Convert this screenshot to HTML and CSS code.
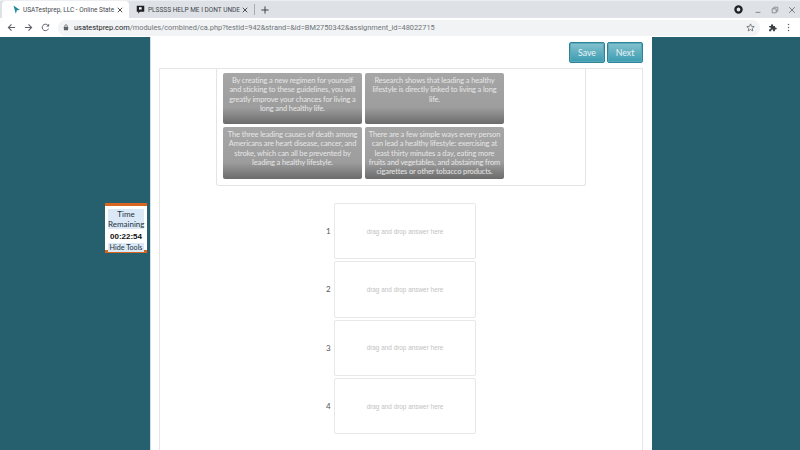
FILE: index.html
```html
<!DOCTYPE html>
<html lang="en">
<head>
<meta charset="utf-8">
<title>USATestprep</title>
<link rel="stylesheet" href="styles.css">
</head>
<body>
<header class="browser">
  <div class="tabstrip">
    <div class="tab tab-active">
      <svg class="favicon" viewBox="0 0 12 12"><path d="M2 0.5 L10.5 6.5 L6.6 7 L5 11.5 Z" fill="#1f8a9a"/></svg>
      <span class="tab-title">USATestprep, LLC - Online State</span>
      <svg class="tab-x" viewBox="0 0 8 8"><path d="M1 1 L7 7 M7 1 L1 7" stroke="#3c4043" stroke-width="1.2"/></svg>
    </div>
    <div class="tab">
      <svg class="favicon" viewBox="0 0 12 12"><path d="M1 1 H11 V9 H5 L3 11.5 V9 H1 Z" fill="#202124"/><rect x="4" y="3" width="3.5" height="3" fill="#fff"/></svg>
      <span class="tab-title">PLSSSS HELP ME I DONT UNDE</span>
      <svg class="tab-x" viewBox="0 0 8 8"><path d="M1 1 L7 7 M7 1 L1 7" stroke="#3c4043" stroke-width="1.2"/></svg>
    </div>
    <div class="tab-sep"></div>
    <svg class="new-tab" viewBox="0 0 10 10"><path d="M5 0.5 V9.5 M0.5 5 H9.5" stroke="#3c4043" stroke-width="1.2"/></svg>
    <div class="window-controls">
      <svg class="rec" viewBox="0 0 10 10"><circle cx="5" cy="5" r="3.4" fill="none" stroke="#202124" stroke-width="2.6"/></svg>
      <svg class="win" viewBox="0 0 10 10"><path d="M2 8 H8" stroke="#70757a" stroke-width="1"/></svg>
      <svg class="win" viewBox="0 0 10 10"><path d="M1.5 3.5 H6.5 V8.5 H1.5 Z M3.5 3.5 V1.5 H8.5 V6.5 H6.5" fill="none" stroke="#70757a" stroke-width="0.9"/></svg>
      <svg class="win" viewBox="0 0 10 10"><path d="M1.5 1.5 L8.5 8.5 M8.5 1.5 L1.5 8.5" stroke="#5f6368" stroke-width="1"/></svg>
    </div>
  </div>
  <div class="toolbar">
    <svg class="nav" viewBox="0 0 10 10"><path d="M9 5 H1.5 M5 1.5 L1.5 5 L5 8.5" fill="none" stroke="#5f6368" stroke-width="1.2"/></svg>
    <svg class="nav" viewBox="0 0 10 10"><path d="M1 5 H8.5 M5 1.5 L8.5 5 L5 8.5" fill="none" stroke="#5f6368" stroke-width="1.2"/></svg>
    <svg class="nav" viewBox="0 0 10 10"><path d="M8.3 6.2 A3.6 3.6 0 1 1 7.6 2.5" fill="none" stroke="#5f6368" stroke-width="1.1"/><path d="M9 0.8 V4 H5.8 Z" fill="#5f6368"/></svg>
    <div class="omnibox">
      <svg class="lock" viewBox="0 0 8 10"><path d="M2.2 4 V2.8 A1.8 1.8 0 0 1 5.8 2.8 V4" fill="none" stroke="#5f6368" stroke-width="1"/><rect x="1" y="4" width="6" height="5" rx="0.6" fill="#5f6368"/></svg>
      <span class="url"><b class="host">usatestprep.com</b>/modules/combined/ca.php?testid=942&amp;strand=&amp;id=BM2750342&amp;assignment_id=48022715</span>
      <svg class="star" viewBox="0 0 12 12"><path d="M6 1.2 L7.4 4.5 L11 4.8 L8.3 7.1 L9.1 10.6 L6 8.8 L2.9 10.6 L3.7 7.1 L1 4.8 L4.6 4.5 Z" fill="none" stroke="#5f6368" stroke-width="1"/></svg>
    </div>
    <svg class="ext" viewBox="0 0 12 12"><path d="M1.5 4 H4 V3 A1.4 1.4 0 0 1 6.8 3 V4 H9.2 V6 H10.2 A1.4 1.4 0 0 1 10.2 8.8 H9.2 V11 H6.8 V10 A1.2 1.2 0 0 0 4.4 10 V11 H1.5 V8.2 H2.4 A1.3 1.3 0 0 0 2.4 5.6 H1.5 Z" fill="#3c4043"/></svg>
    <svg class="menu" viewBox="0 0 4 12"><circle cx="2" cy="2" r="1" fill="#5f6368"/><circle cx="2" cy="6" r="1" fill="#5f6368"/><circle cx="2" cy="10" r="1" fill="#5f6368"/></svg>
  </div>
</header>

<main class="site">
  <div class="sheet">
    <div class="actions">
      <button class="btn">Save</button>
      <button class="btn">Next</button>
    </div>
    <div class="panel">
      <div class="bank">
        <div class="cards">
          <div class="card">By creating a new regimen for yourself and sticking to these guidelines, you will greatly improve your chances for living a long and healthy life.</div>
          <div class="card">Research shows that leading a healthy lifestyle is directly linked to living a long life.</div>
          <div class="card">The three leading causes of death among Americans are heart disease, cancer, and stroke, which can all be prevented by leading a healthy lifestyle.</div>
          <div class="card">There are a few simple ways every person can lead a healthy lifestyle: exercising at least thirty minutes a day, eating more fruits and vegetables, and abstaining from cigarettes or other tobacco products.</div>
        </div>
      </div>
      <div class="slots">
        <div class="slot"><span class="num">1</span><div class="drop">drag and drop answer here</div></div>
        <div class="slot"><span class="num">2</span><div class="drop">drag and drop answer here</div></div>
        <div class="slot"><span class="num">3</span><div class="drop">drag and drop answer here</div></div>
        <div class="slot"><span class="num">4</span><div class="drop">drag and drop answer here</div></div>
      </div>
    </div>
  </div>
  <aside class="timer">
    <div class="timer-label">Time Remaining</div>
    <div class="timer-clock">00:22:54</div>
    <div class="timer-hide">Hide Tools</div>
  </aside>
</main>
</body>
</html>
```
FILE: styles.css
```css
* { box-sizing: border-box; }
html, body { margin: 0; height: 100%; overflow: hidden; }
body { width: 800px; height: 450px; font-family: "Liberation Sans", Arial, sans-serif; background: #265f6d; display: flex; flex-direction: column; }

.browser { flex: none; height: 37px; background: #fff; }
.tabstrip { height: 18px; background: #dee1e6; display: flex; align-items: center; border-top: 1px solid #eceef1; }
.tab { height: 17px; display: flex; align-items: center; }
.tab-active { background: #fff; width: 127px; margin-left: 2px; padding-left: 10px; border-radius: 4px 4px 0 0; }
.tab + .tab { width: 125px; padding-left: 4px; margin-left: 3px; }
.favicon { width: 9px; height: 9px; flex: none; }
.tab-title { font-family: "Roboto", sans-serif; font-size: 6.5px; color: #45494d; margin-left: 2px; white-space: nowrap; width: 92px; flex: none; }
.tab + .tab .tab-title { width: 90px; margin-left: 3px; }
.tab-x { width: 6px; height: 6px; margin-left: 2px; flex: none; }
.tab + .tab .tab-x { margin-left: 4px; }
.tab-sep { width: 1px; height: 11px; background: #a9acb1; margin-left: -3px; }
.new-tab { width: 8px; height: 8px; margin-left: 6px; }
.window-controls { margin-left: auto; display: flex; align-items: center; padding-right: 4px; }
.rec { width: 9px; height: 9px; margin-right: 2px; }
.win { width: 8px; height: 8px; margin-left: 9px; }

.toolbar { height: 19px; display: flex; align-items: center; padding-left: 7px; background: #fff; }
.nav { width: 9px; height: 9px; margin-right: 8px; flex: none; }
.omnibox { width: 702px; height: 16px; border-radius: 8px; background: #f1f3f4; display: flex; align-items: center; padding-left: 5px; }
.lock { width: 6px; height: 7px; flex: none; }
.url { font-family: "Roboto", sans-serif; font-size: 7.4px; color: #6f7479; margin-left: 5px; white-space: nowrap; }
.host { font-weight: 400; color: #202124; }
.star { width: 9px; height: 9px; margin-left: auto; margin-right: 5px; }
.ext { width: 9px; height: 9px; margin-left: 8px; flex: none; }
.menu { width: 3px; height: 9px; margin-left: 10px; flex: none; }

.site { flex: 1; position: relative; display: flex; justify-content: center; background: #265f6d; min-height: 0; padding-left: 2px; }
.sheet { width: 502px; background: #fff; padding: 5px 9px 0 8px; display: flex; flex-direction: column; border-left: 1px solid #cfe0e3; }
.actions { height: 26px; flex: none; display: flex; justify-content: flex-end; gap: 2px; }
.btn { width: 36px; height: 21px; padding: 0; font-family: "Lato", sans-serif; font-size: 8.8px; color: #eaf5f7; border: 1px solid #2c8496; border-radius: 2px; background: linear-gradient(#86c2cf, #3a9bb0); box-shadow: inset 0 0 0 1px #5aa9ba; }
.panel { flex: 1; border: 1px solid #e6e6e6; border-bottom: 0; display: flex; flex-direction: column; align-items: center; min-height: 0; }
.bank { width: 370px; height: 117px; flex: none; border: 1px solid #e4e4e4; border-top: 0; border-radius: 0 0 3px 3px; padding: 4px 0 0 6px; }
.cards { display: grid; grid-template-columns: 139px 139px; grid-template-rows: 51px 52px; gap: 3px; }
.card { padding: 3px 3px 0; border-radius: 2px; text-align: center; font-family: "Lato", sans-serif; font-size: 7.5px; letter-spacing: -0.13px; line-height: 9.3px; color: #e6e6e6; background: linear-gradient(#a6a6a6 0, #9d9d9d 68%, #6b6b6b 100%); }
.slots { width: 261px; margin-top: 17px; display: flex; flex-direction: column; gap: 2px; align-self: flex-start; margin-left: 162px; }
.slot { display: flex; align-items: center; }
.num { width: 12px; font-family: "Lato", sans-serif; font-size: 8px; color: #555; padding-left: 4px; }
.drop { width: 142px; height: 56.3px; border: 1px solid #e8e8e8; border-radius: 2px; display: flex; align-items: center; justify-content: center; font-size: 6.4px; color: #c2c2c2; }

.timer { position: absolute; left: 105px; top: 166px; width: 42px; height: 50px; background: #fff; border-top: 3px solid #d9661f; border-bottom: 3px solid #d9661f; display: flex; flex-direction: column; align-items: center; text-align: center; padding-top: 3px; font-family: "Lato", sans-serif; color: #24343f; }
.timer-label { font-size: 8px; line-height: 10px; background: #dbe8f5; width: 36px; }
.timer-clock { font-family: "Liberation Sans", sans-serif; font-weight: 700; font-size: 8px; line-height: 10px; margin-top: 3px; color: #111; }
.timer-hide { font-size: 7.2px; line-height: 9px; background: #dbe8f5; margin-top: 1px; padding: 0 2px; }
```
